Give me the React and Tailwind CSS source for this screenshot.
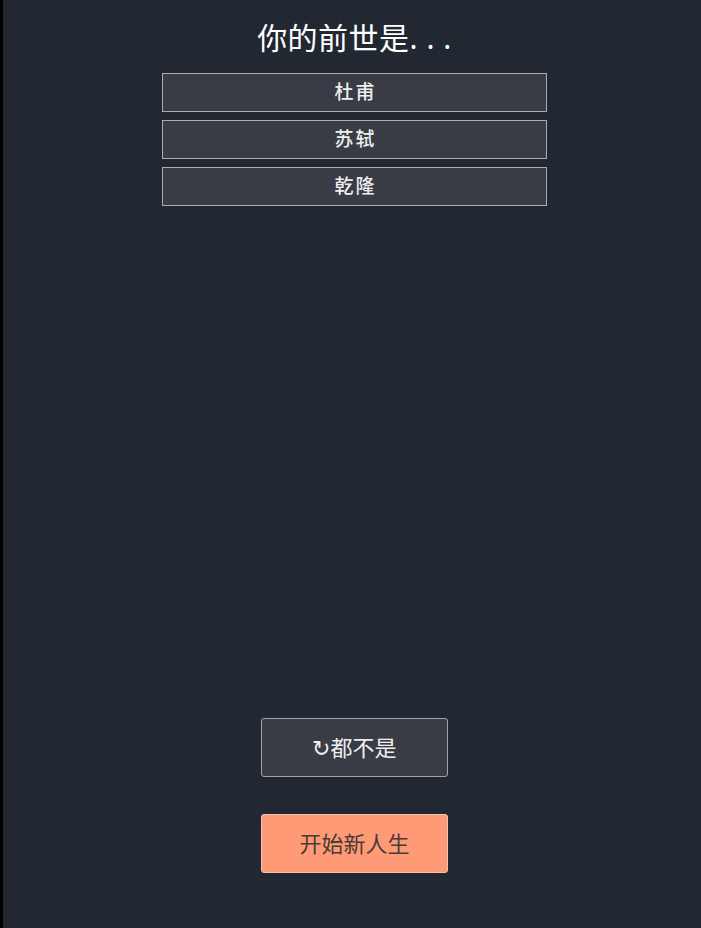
import React from "react";

const options = ["杜甫", "苏轼", "乾隆"];

const font = {
  fontFamily: '"Noto Sans", "Noto Sans CJK SC", sans-serif',
};

export default function App() {
  return (
    <div className="flex h-[928px] w-full bg-black" style={font}>
      <div className="ml-[3px] flex flex-1 flex-col items-center bg-[#222831] pl-[5px]">
        <h1 className="mt-[16px] text-[30px] leading-[44px] tracking-[0.5px] text-white">你的前世是. . .</h1>

        <div className="mt-[13px] flex w-[385px] flex-col gap-[8px]">
          {options.map(name => (
            <div
              key={name}
              className="flex h-[39px] items-center justify-center border border-[#a9adb4] bg-[#393c45] pl-[2px] text-[19px] font-medium tracking-[2px] text-[#eeeeee]"
            >
              {name}
            </div>
          ))}
        </div>

        <div className="flex-1" />

        {/* bottom buttons */}
        <button className="flex h-[59px] w-[187px] items-center justify-center rounded-[3px] border border-[#9fa3aa] bg-[#393c45] text-[22px] text-[#eeeeee]">
          ↻都不是
        </button>
        <button className="mt-[37px] mb-[55px] flex h-[59px] w-[187px] items-center justify-center rounded-[3px] border border-[#f3c3ad] bg-[#ff9a76] text-[22px] text-[#4a3b35]">
          开始新人生
        </button>
      </div>
    </div>
  );
}
